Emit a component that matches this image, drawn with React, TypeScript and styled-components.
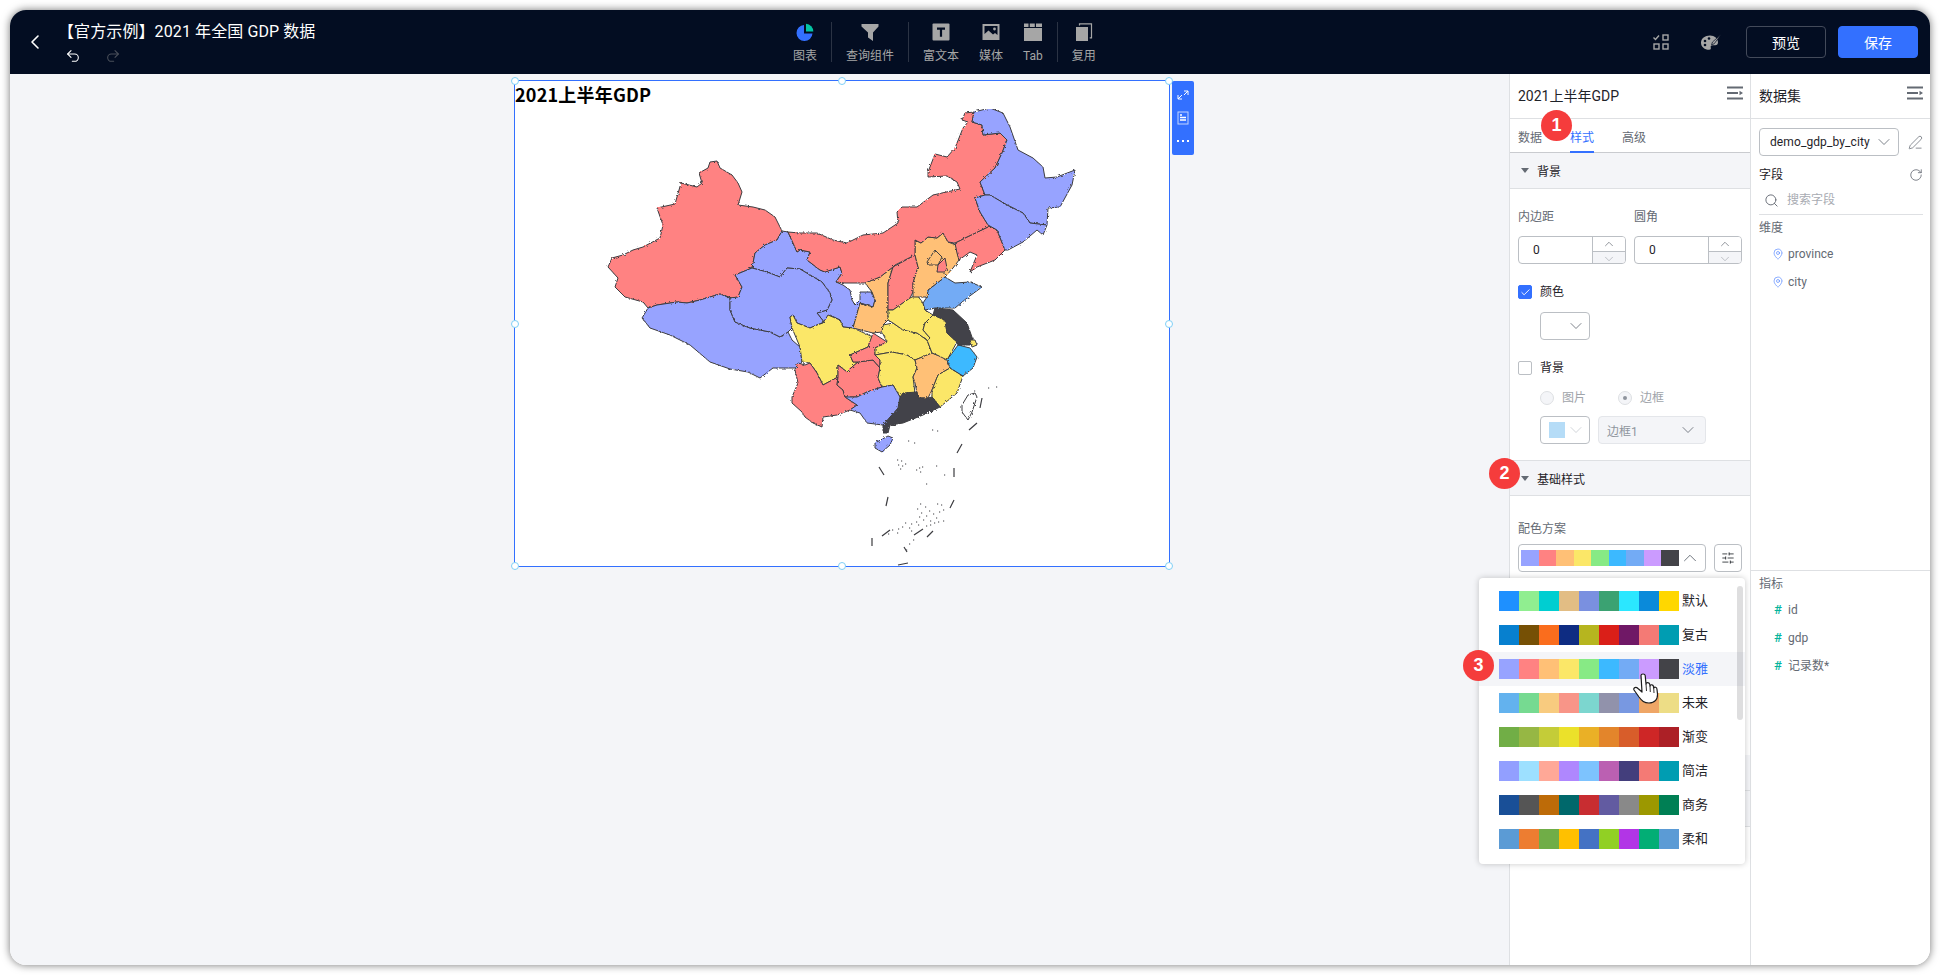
import React from 'react';
import styled, { createGlobalStyle } from 'styled-components';
import { Check, ChevronDown, ChevronLeft, ChevronUp, MapPin, PenLine, Redo2, RotateCw, Search, SlidersHorizontal, Undo2 } from 'lucide-react';

const SANS = 'Roboto, "Noto Sans CJK SC", sans-serif';

const palettes = [
  { name: '默认', colors: ['#1E90FF', '#90EE90', '#00CED1', '#E2BD84', '#7A90E0', '#3BA272', '#2BE7FF', '#0A8ADA', '#FFD700'] },
  { name: '复古', colors: ['#0780cf', '#765005', '#fa6d1d', '#0e2c82', '#b6b51f', '#da1f18', '#701866', '#f47a75', '#009db2'] },
  { name: '淡雅', colors: ['#97a3ff', '#ff8282', '#ffc076', '#fbe768', '#87ea85', '#3cb9ff', '#73abf5', '#cb9bff', '#434348'] },
  { name: '未来', colors: ['#63b2ee', '#76da91', '#f8cb7f', '#f89588', '#7cd6cf', '#9192ab', '#7898e1', '#efa666', '#eddd86'] },
  { name: '渐变', colors: ['#71ae46', '#96b744', '#c4cc38', '#ebe12a', '#eab026', '#e3852b', '#d85d2a', '#ce2626', '#ac2026'] },
  { name: '简洁', colors: ['#929fff', '#9de0ff', '#ffa897', '#af87fe', '#7dc3fe', '#bb60b2', '#433e7c', '#f47a75', '#009db2'] },
  { name: '商务', colors: ['#194f97', '#555555', '#bd6b08', '#00686b', '#c82d31', '#625ba1', '#898989', '#9c9800', '#007f54'] },
  { name: '柔和', colors: ['#5b9bd5', '#ed7d31', '#70ad47', '#ffc000', '#4472c4', '#91d024', '#b235e6', '#02ae75', '#5b9bd5'] },
];

const [P, R, O, Y, , C, B, , D] = palettes[2].colors;

const provinces: [string, string][] = [
  [R, '710,162 717,161 720,168 732,175 738,183 742,192 738,205 753,207 765,210 775,217 782,231 777,240 765,245 755,253 752,268 735,275 742,287 738,297 732,298 720,294 700,300 687,303 677,302 657,305 648,308 643,302 625,297 615,287 618,278 608,267 612,258 623,255 633,250 643,247 660,238 663,225 657,208 675,204 677,197 681,183 697,187 702,183 699,173 708,168'],
  [P, '648,308 657,305 677,302 687,303 700,300 720,294 730,298 730,310 735,322 750,328 760,330 770,332 780,337 788,332 792,340 800,347 802,362 797,368 787,368 773,368 760,378 748,372 730,369 710,362 690,345 670,335 650,328 642,318'],
  [P, '782,231 788,232 793,243 797,252 800,250 810,252 807,260 820,270 825,272 840,267 842,273 836,282 843,285 850,290 852,300 855,305 860,300 860,292 872,292 875,300 873,307 860,303 858,310 853,328 843,327 840,320 830,315 824,322 817,313 827,310 832,300 830,293 822,282 810,275 800,269 787,268 780,277 767,272 752,268 755,253 765,245 777,240'],
  [P, '735,275 752,268 767,272 780,277 787,268 800,269 810,275 822,282 830,293 832,300 827,310 817,313 824,322 817,325 810,328 797,323 793,315 790,317 792,328 788,332 780,337 770,332 760,330 750,328 735,322 730,310 730,298 738,297 742,287'],
  [Y, '790,317 793,315 797,323 810,328 817,325 823,323 828,315 840,320 843,327 853,328 873,337 868,347 850,355 853,362 858,362 852,367 847,372 838,365 838,377 823,385 817,373 810,363 802,362 800,347 792,328'],
  [R, '798,363 805,365 810,363 817,373 823,385 838,377 837,385 843,390 845,397 857,405 850,410 837,415 823,417 822,427 813,423 805,417 802,412 792,403 792,397 798,383 795,370'],
  [R, '838,377 838,365 847,372 852,367 858,362 873,360 880,368 878,378 882,387 867,392 857,397 845,397 843,390 837,385'],
  [R, '873,333 887,342 875,348 875,355 880,360 880,368 873,360 858,362 853,362 850,355 868,347'],
  [Y, '882,332 883,325 893,323 903,330 917,333 927,340 932,353 915,360 907,355 892,352 875,355 875,348 887,342'],
  [Y, '875,355 892,352 907,355 915,360 917,368 913,377 915,393 900,397 893,385 882,387 878,378 880,368 880,360'],
  [O, '915,360 932,353 937,355 948,358 950,368 938,375 932,390 928,398 918,398 915,383 913,377 917,368'],
  [Y, '950,368 963,376 957,393 940,407 932,397 932,390 938,375'],
  [C, '947,360 958,345 970,348 977,357 973,368 963,376 950,368'],
  [D, '900,397 903,393 917,392 918,398 928,398 932,397 940,407 923,415 903,423 890,425 888,433 883,433 883,425 898,408'],
  [P, '845,397 857,397 867,392 882,387 893,385 900,397 898,408 883,425 867,423 860,413 850,410 857,405'],
  [P, '875,443 888,436 893,438 890,445 882,452 875,448'],
  [O, '865,283 880,277 893,267 888,283 888,320 883,325 882,332 873,333 853,328 858,310 860,303 873,307 875,300 872,292'],
  [R, '893,267 915,255 918,267 913,283 913,292 910,298 893,310 888,310 888,283'],
  [Y, '888,310 893,310 910,298 917,295 923,303 925,310 933,315 925,323 923,330 930,338 927,340 917,333 903,330 893,323 888,320'],
  [Y, '925,323 933,315 945,320 947,333 957,342 947,360 937,355 932,353 927,340 930,338 923,330'],
  [D, '935,308 953,310 967,323 973,340 970,345 958,345 957,342 947,333 945,320 933,315'],
  [Y, '970,340 975,340 977,345 972,347'],
  [B, '923,303 927,297 928,290 945,277 955,283 970,282 982,287 967,298 955,308 935,308 925,310'],
  [O, '915,240 921,243 928,237 937,238 943,233 948,242 956,245 959,260 953,268 945,277 928,290 927,297 913,297 913,283 918,267 915,255'],
  [O, '927,262 935,250 942,257 938,265 928,265'],
  [R, '938,265 945,258 947,268 945,272 937,272'],
  [R, '955,243 967,237 990,226 997,230 1005,250 995,260 977,267 970,272 977,255 970,252 959,260 957,253'],
  [R, '788,232 800,233 817,233 833,240 847,243 863,235 883,233 898,223 897,212 902,207 917,207 933,195 960,189 957,182 947,176 928,177 928,172 935,154 947,157 955,148 963,128 968,122 962,120 965,113 974,112 972,122 982,125 983,135 1000,133 1007,140 1002,153 995,168 980,182 985,195 975,198 980,212 988,225 990,226 967,237 955,243 948,242 943,233 937,238 928,237 921,243 915,240 915,255 895,265 893,267 880,277 865,283 845,283 836,282 842,273 840,267 825,272 820,270 807,260 810,252 800,250 797,252 793,243'],
  [P, '974,112 990,108 1003,113 1010,127 1018,150 1033,158 1043,167 1045,178 1057,177 1075,170 1072,185 1060,207 1048,208 1047,225 1030,223 1023,213 1007,205 990,195 985,195 980,182 995,168 1002,153 1007,140 1000,133 983,135 982,125 972,122'],
  [P, '975,198 985,195 990,195 1007,205 1023,213 1030,223 1047,225 1043,235 1037,230 1023,242 1008,250 1005,250 997,230 988,225 980,212'],
  ['#ffffff', '968,395 975,393 977,397 972,412 968,420 962,412 962,405'],
];

const seaDashes = [
  'M969 430L977 423', 'M980 408L982 398', 'M957 453L962 444', 'M879 467L884 475', 'M954 468V477', 'M886 506L888 497',
  'M950 508L954 500', 'M872 546L872 538', 'M927 537L933 531', 'M914 535L923 529', 'M882 536L890 530', 'M898 565L908 563', 'M904 547L907 552',
];

const seaDots = [
  [897, 460], [901, 461], [898, 465], [902, 466], [905, 464], [900, 469], [916, 470], [919, 468], [922, 467], [920, 472], [936, 466], [944, 475], [926, 484], [920, 504], [917, 509],
  [921, 513], [925, 507], [919, 517], [926, 516], [929, 511], [933, 514], [936, 518], [939, 512], [943, 510], [941, 505], [937, 504], [930, 521], [934, 523], [923, 520], [916, 522],
  [911, 524], [905, 523], [902, 527], [898, 529], [897, 533], [909, 528], [911, 531], [918, 525], [926, 526], [930, 525], [913, 540], [909, 544], [906, 550], [943, 521], [938, 522],
  [892, 530], [888, 534], [933, 388], [974, 391], [988, 388], [996, 387], [932, 430], [937, 431], [908, 441], [914, 443],
];

const GlobalStyle = createGlobalStyle`
  html, body {
    margin: 0;
    background: #fff;
    overflow: hidden;
  }
  * {
    box-sizing: border-box;
  }
`;

const Frame = styled.div`
  margin: 10px;
  width: 1920px;
  height: 955px;
  border-radius: 16px;
  box-shadow: 0 0 9px rgba(0, 0, 0, 0.55);
  font-family: ${SANS};
  font-size: 12px;
  color: #1f2329;
  display: flex;
  flex-direction: column;
  overflow: hidden;
  background: #fff;
`;

const TopBar = styled.header`
  height: 64px;
  flex: none;
  background: #030d22;
  display: flex;
  align-items: center;
  padding-right: 12px;
`;

const BackButton = styled.div`
  width: 48px;
  padding-left: 13px;
  display: flex;
  color: #fff;
`;

const TitleBlock = styled.div`
  width: 735px;
`;

const DocTitle = styled.div`
  font-size: 16px;
  line-height: 22px;
  letter-spacing: 0.1px;
  color: #fff;
`;

const History = styled.div`
  display: flex;
  gap: 24px;
  margin: 5px 0 0 7px;
  height: 16px;
`;

const Tools = styled.nav`
  display: flex;
  align-items: center;
  flex: 1;
  padding-top: 3px;
`;

const ToolDivider = styled.span`
  width: 1px;
  height: 40px;
  margin: -3px 14px 0 14px;
  background: #2b3344;
`;

const ToolItem = styled.div<{ $gap?: number }>`
  display: flex;
  flex-direction: column;
  align-items: center;
  gap: 7px;
  margin-right: ${(p) => p.$gap ?? 0}px;
  color: #a6a6a6;
  line-height: 16px;
`;

const ToolIcon = styled.svg`
  width: 18px;
  height: 18px;
  display: block;
`;

const BarIcon = styled.span<{ $gap: number }>`
  display: flex;
  margin-right: ${(p) => p.$gap}px;
`;

const PlainButton = styled.button`
  width: 80px;
  height: 32px;
  border: 1px solid #434a5a;
  border-radius: 4px;
  background: transparent;
  color: #fff;
  font: 14px ${SANS};
`;

const SaveButton = styled(PlainButton)`
  margin-left: 12px;
  background: #3370ff;
  border-color: #3370ff;
`;

const Body = styled.main`
  flex: 1;
  display: flex;
  min-height: 0;
`;

const Canvas = styled.section`
  flex: 1;
  background: #f4f5f8;
  padding: 6px 0 0 504px;
`;

const Widget = styled.div`
  position: relative;
  width: 656px;
  height: 487px;
  background: #fff;
  border: 1px solid #3370ff;
`;

const WidgetTitle = styled.div`
  height: 28px;
  font-size: 18px;
  font-weight: 700;
  line-height: 26px;
  letter-spacing: 0.2px;
  color: #000;
  font-family: "Noto Sans CJK SC", sans-serif;
`;

const MapSvg = styled.svg`
  display: block;
  width: 654px;
  height: 457px;
`;

const Handle = styled.span<{ $x: number; $y: number }>`
  position: absolute;
  left: ${(p) => p.$x}%;
  top: ${(p) => p.$y}%;
  width: 8px;
  height: 8px;
  transform: translate(-50%, -50%);
  border-radius: 50%;
  background: #fff;
  border: 1px solid #7fd0f7;
`;

const WidgetBar = styled.div`
  position: absolute;
  left: 657px;
  top: 0;
  width: 22px;
  height: 74px;
  background: #3370ff;
  border-radius: 2px;
  display: flex;
  flex-direction: column;
  align-items: center;
  justify-content: space-around;
  padding: 3px 0;
`;

const BarGlyph = styled.svg`
  width: 12px;
  height: 14px;
  display: block;
`;

const PanelA = styled.aside`
  position: relative;
  width: 241px;
  flex: none;
  background: #fff;
  border-left: 1px solid #dee0e3;
`;

const PanelB = styled.aside`
  width: 180px;
  flex: none;
  background: #fff;
  border-left: 1px solid #dee0e3;
  display: flex;
  flex-direction: column;
`;

const PanelHead = styled.div`
  height: 45px;
  flex: none;
  display: flex;
  align-items: center;
  justify-content: space-between;
  padding: 0 7px 0 8px;
  border-bottom: 1px solid #dee0e3;
  font-size: 14px;
  line-height: 20px;
  svg {
    margin-top: -6px;
  }
`;

const Tabs = styled.div`
  height: 34px;
  display: flex;
  gap: 28px;
  padding-left: 8px;
  border-bottom: 1px solid #c9cbcf;
`;

const Tab = styled.div<{ $active?: boolean }>`
  line-height: 38px;
  height: 34px;
  color: ${(p) => (p.$active ? '#3370ff' : '#646a73')};
  border-bottom: ${(p) => (p.$active ? '2px solid #3370ff' : 'none')};
`;

const SectionBar = styled.div<{ $top?: boolean }>`
  height: 36px;
  display: flex;
  align-items: center;
  gap: 8px;
  padding-left: 11px;
  background: #f4f5f8;
  border-bottom: 1px solid #dee0e3;
  border-top: ${(p) => (p.$top ? '1px solid #dee0e3' : 'none')};
  &::before {
    content: '';
    border-left: 4px solid transparent;
    border-right: 4px solid transparent;
    border-top: 5px solid #646a73;
  }
`;

const SectionBody = styled.div`
  padding: 18px 8px 16px;
`;

const Columns = styled.div`
  display: flex;
  gap: 8px;
`;

const Field = styled.div`
  width: 108px;
`;

const FieldLabel = styled.div`
  line-height: 20px;
  color: #646a73;
  margin-bottom: 9px;
`;

const NumberBox = styled.div`
  height: 28px;
  display: flex;
  border: 1px solid #bbbfc4;
  border-radius: 4px;
  overflow: hidden;
`;

const NumberValue = styled.div`
  flex: 1;
  padding-left: 14px;
  line-height: 26px;
`;

const Stepper = styled.div`
  width: 33px;
  display: flex;
  flex-direction: column;
  border-left: 1px solid #bbbfc4;
`;

const StepCell = styled.div<{ $muted?: boolean }>`
  flex: 1;
  display: flex;
  align-items: center;
  justify-content: center;
  background: ${(p) => (p.$muted ? '#f4f5f8' : '#fff')};
  border-top: ${(p) => (p.$muted ? '1px solid #bbbfc4' : 'none')};
  color: ${(p) => (p.$muted ? '#a8abb2' : '#646a73')};
`;

const CheckRow = styled.div`
  display: flex;
  align-items: center;
  gap: 8px;
  line-height: 20px;
  margin-top: 18px;
`;

const CheckBox = styled.span<{ $on?: boolean }>`
  width: 14px;
  height: 14px;
  border-radius: 2px;
  display: flex;
  align-items: center;
  justify-content: center;
  background: ${(p) => (p.$on ? '#3370ff' : '#fff')};
  border: 1px solid ${(p) => (p.$on ? '#3370ff' : '#bbbfc4')};
  color: #fff;
`;

const Indented = styled.div<{ $top: number }>`
  margin: ${(p) => p.$top}px 0 0 22px;
  display: flex;
  align-items: center;
  gap: 8px;
`;

const SelectBox = styled.div<{ $w: number; $disabled?: boolean }>`
  width: ${(p) => p.$w}px;
  height: 28px;
  display: flex;
  align-items: center;
  justify-content: space-between;
  padding: 0 ${(p) => (p.$disabled ? 7 : 3)}px 0 8px;
  border-radius: 4px;
  border: 1px solid ${(p) => (p.$disabled ? '#e4e6ea' : '#bbbfc4')};
  background: ${(p) => (p.$disabled ? '#f4f5f8' : '#fff')};
  color: ${(p) => (p.$disabled ? '#8f959e' : '#1f2329')};
`;

const ColorChip = styled.span`
  width: 16px;
  height: 16px;
  background: #b5dcf7;
`;

const RadioRow = styled.div`
  display: flex;
  align-items: center;
  line-height: 20px;
  color: #a0a4aa;
`;

const Radio = styled.span<{ $on?: boolean }>`
  width: 14px;
  height: 14px;
  border-radius: 50%;
  border: 1px solid #dee0e3;
  background: #f4f5f8;
  margin-right: 8px;
  display: flex;
  align-items: center;
  justify-content: center;
  &::after {
    content: '';
    width: 4px;
    height: 4px;
    border-radius: 50%;
    background: ${(p) => (p.$on ? '#8f959e' : 'transparent')};
  }
`;

const RadioText = styled.span`
  width: 56px;
`;

const PaletteBody = styled.div`
  padding: 23px 8px 0;
  height: 259px;
`;

const PaletteLabel = styled.div`
  line-height: 20px;
  color: #646a73;
  margin-bottom: 5px;
`;

const PaletteRow = styled.div`
  display: flex;
  gap: 8px;
`;

const PaletteSelect = styled.div`
  width: 188px;
  height: 28px;
  display: flex;
  align-items: center;
  padding: 0 4px 0 2px;
  justify-content: space-between;
  border: 1px solid #bbbfc4;
  border-radius: 4px;
`;

const MiniStrip = styled.div`
  display: flex;
`;

const MiniSwatch = styled.span`
  width: 17.55px;
  height: 16px;
`;

const SquareButton = styled.div`
  width: 28px;
  height: 28px;
  border: 1px solid #bbbfc4;
  border-radius: 4px;
  display: flex;
  align-items: center;
  justify-content: center;
  color: #1f2329;
`;

const PaletteMenu = styled.div`
  position: absolute;
  left: -31px;
  top: 504px;
  width: 266px;
  height: 286px;
  padding-top: 6px;
  background: #fff;
  border-radius: 4px;
  box-shadow: 0 0 6px rgba(0, 0, 0, 0.22);
  z-index: 2;
`;

const MenuRow = styled.div<{ $active?: boolean }>`
  height: 34px;
  display: flex;
  align-items: center;
  padding-left: 20px;
  gap: 3px;
  font-size: 13px;
  line-height: 18px;
  background: ${(p) => (p.$active ? '#f4f5f8' : 'transparent')};
  color: ${(p) => (p.$active ? '#3370ff' : '#1f2329')};
`;

const Swatch = styled.span`
  width: 20px;
  height: 20px;
`;

const ScrollThumb = styled.span`
  position: absolute;
  left: 258px;
  top: 8px;
  width: 6px;
  height: 134px;
  border-radius: 3px;
  background: rgba(31, 35, 41, 0.15);
`;

const Hand = styled.svg`
  position: absolute;
  left: 154px;
  top: 94px;
  width: 25px;
  height: 32px;
`;

const StepBadge = styled.span<{ $x: number; $y: number }>`
  position: absolute;
  left: ${(p) => p.$x}px;
  top: ${(p) => p.$y}px;
  width: 31px;
  height: 31px;
  border-radius: 50%;
  background: #f53c3c;
  color: #fff;
  font-size: 18px;
  font-weight: 700;
  font-family: "Liberation Sans", sans-serif;
  display: flex;
  align-items: center;
  justify-content: center;
  z-index: 3;
`;

const DatasetArea = styled.div`
  height: 452px;
  flex: none;
  padding: 9px 7px 0 8px;
  border-bottom: 1px solid #dee0e3;
`;

const DatasetRow = styled.div`
  display: flex;
  align-items: center;
  justify-content: space-between;
`;

const DatasetSelect = styled.div`
  width: 140px;
  height: 28px;
  display: flex;
  align-items: center;
  justify-content: space-between;
  padding: 0 4px 0 10px;
  border: 1px solid #bbbfc4;
  border-radius: 4px;
  letter-spacing: 0.1px;
`;

const FieldsHead = styled.div`
  display: flex;
  align-items: center;
  justify-content: space-between;
  line-height: 20px;
  margin-top: 9px;
`;

const SearchRow = styled.div`
  display: flex;
  align-items: center;
  gap: 8px;
  margin-top: 5px;
  padding: 0 0 4px 5px;
  line-height: 20px;
  color: #a8abb2;
  border-bottom: 1px solid #dee0e3;
  svg {
    color: #646a73;
  }
`;

const GroupLabel = styled.div<{ $top: number }>`
  margin-top: ${(p) => p.$top}px;
  line-height: 20px;
  color: #646a73;
  margin-bottom: 2px;
`;

const FieldRow = styled.div`
  height: 28px;
  display: flex;
  align-items: center;
  gap: 5px;
  padding-left: 14px;
  color: #646a73;
  line-height: 16px;
`;

const FieldMark = styled.span`
  width: 10px;
  display: flex;
  justify-content: center;
  color: #04b49c;
  font-size: 13px;
  font-weight: 500;
`;

const MetricsArea = styled.div`
  flex: 1;
  padding: 3px 8px 0;
`;

const handles = [
  [0, 0], [50, 0], [100, 0], [0, 50], [100, 50], [0, 100], [50, 100], [100, 100],
];

const CollapseIcon = () => (
  <svg width="16" height="14" viewBox="0 0 16 14">
    <path d="M0 0.5h16v2H0zM0 6h11v2H0zM0 11.5h16v2H0z" fill="#646a73" />
    <path d="M12.5 4.8L16 7l-3.5 2.2z" fill="#646a73" />
  </svg>
);

const Chevron = ({ light }: { light?: boolean }) => (
  <ChevronDown size={20} strokeWidth={1} color={light ? '#c8ccd2' : '#646a73'} />
);

const StepUp = () => <ChevronUp size={14} strokeWidth={1.2} />;
const StepDown = () => <ChevronDown size={14} strokeWidth={1.2} />;

const Pin = () => (
  <FieldMark>
    <MapPin size={12} strokeWidth={1.4} color="#5d8cff" style={{ flex: 'none' }} />
  </FieldMark>
);

const PieTool = () => (
  <ToolIcon viewBox="0 0 18 18">
    <path d="M8 2a8 8 0 1 0 8.500 8.500H8z" fill="#3370ff" />
    <path d="M10 0.800a7.500 7.500 0 0 1 7.300 7.700H10z" fill="#04c4a4" />
  </ToolIcon>
);

const FunnelTool = () => (
  <ToolIcon viewBox="0 0 18 18">
    <path d="M0.500 1h17v2.500l-5.500 6v8.500l-5-3.500v-5l-6.500-6z" fill="#a6a6a6" />
  </ToolIcon>
);

const TextTool = () => (
  <ToolIcon viewBox="0 0 18 18">
    <rect x="0.500" y="0.500" width="17" height="17" rx="1" fill="#a6a6a6" />
    <path d="M5 4.500h8v2.200h-2.900v7H7.900v-7H5z" fill="#030d22" />
  </ToolIcon>
);

const MediaTool = () => (
  <ToolIcon viewBox="0 0 18 18">
    <path d="M0.500 1h17v16H0.500zM2.500 3v8l4-3.500 4.500 4 2-1.500 2.500 2V3z" fill="#a6a6a6" fillRule="evenodd" />
    <circle cx="12.500" cy="6" r="1.400" fill="#a6a6a6" />
  </ToolIcon>
);

const TabTool = () => (
  <ToolIcon viewBox="0 0 18 18">
    <path d="M0 0.500h4.500v3.500H0zM5.800 0.500h5v3.500h-5zM12 0.500h6v3.500h-6zM0 5h18v13H0z" fill="#a6a6a6" />
  </ToolIcon>
);

const CopyTool = () => (
  <ToolIcon viewBox="0 0 18 18">
    <path d="M1 4h12v14H1z" fill="#a6a6a6" />
    <path d="M4.500 2.500V0.800h12v14h-1.800" fill="none" stroke="#a6a6a6" strokeWidth="1.200" />
  </ToolIcon>
);

const App: React.FC = () => {
  return (
    <Frame>
      <GlobalStyle />
      <TopBar>
        <BackButton>
          <ChevronLeft size={24} strokeWidth={1.6} />
        </BackButton>
        <TitleBlock>
          <DocTitle>【官方示例】2021 年全国 GDP 数据</DocTitle>
          <History>
            <Undo2 size={16} color="#fff" strokeWidth={1.6} />
            <Redo2 size={16} color="#4a4f5a" strokeWidth={1.6} />
          </History>
        </TitleBlock>
        <Tools>
          <ToolItem>
            <PieTool />
            图表
          </ToolItem>
          <ToolDivider />
          <ToolItem>
            <FunnelTool />
            查询组件
          </ToolItem>
          <ToolDivider />
          <ToolItem $gap={20}>
            <TextTool />
            富文本
          </ToolItem>
          <ToolItem $gap={20}>
            <MediaTool />
            媒体
          </ToolItem>
          <ToolItem>
            <TabTool />
            Tab
          </ToolItem>
          <ToolDivider />
          <ToolItem>
            <CopyTool />
            复用
          </ToolItem>
        </Tools>
        <BarIcon $gap={32}>
          <svg width="16" height="16" viewBox="0 0 16 16" fill="none" stroke="#a6a6a6" strokeWidth="1.400">
            <path d="M0.500 3.500L2.500 5.500L6 1.500" />
            <rect x="10" y="1" width="5" height="5" />
            <rect x="1" y="10" width="5" height="5" />
            <rect x="10" y="10" width="5" height="5" />
          </svg>
        </BarIcon>
        <BarIcon $gap={25}>
          <svg width="20" height="16" viewBox="0 0 20 16">
            <path d="M9 1.500C4 1.500 0 4.500 0 8.800S3.800 15.800 8 15.800c2.200 0 2-1.500 1.700-2.500-.3-1.200.6-2 2.100-2h2.400c1.800 0 2.800-1 2.800-3 0-3.600-3.400-6.800-8-6.800z" fill="#a6a6a6" />
            <circle cx="4" cy="7" r="1.300" fill="#030d22" />
            <circle cx="8" cy="4.500" r="1.300" fill="#030d22" />
            <circle cx="4" cy="11" r="1.300" fill="#030d22" />
            <path d="M20 0.500L11.500 8 10.500 10.800 13.200 9.800z" fill="#a6a6a6" stroke="#030d22" strokeWidth="0.700" />
          </svg>
        </BarIcon>
        <PlainButton>预览</PlainButton>
        <SaveButton>保存</SaveButton>
      </TopBar>
      <Body>
        <Canvas>
          <Widget>
            <WidgetTitle>2021上半年GDP</WidgetTitle>
            <MapSvg viewBox="515 109 654 457">
              <defs>
                <filter id="rough" x="-2%" y="-2%" width="104%" height="104%">
                  <feTurbulence type="fractalNoise" baseFrequency="0.45" numOctaves="2" seed="4" result="noise" />
                  <feDisplacementMap in="SourceGraphic" in2="noise" scale="3" />
                </filter>
              </defs>
              <g filter="url(#rough)" stroke="#3c3c40" strokeWidth="1" strokeLinejoin="round">
                {provinces.map(([fill, points], i) => (
                  <polygon key={i} points={points} fill={fill} />
                ))}
              </g>
              <path d={seaDashes.join('')} stroke="#3c3c40" strokeWidth="1.200" fill="none" />
              <path d={seaDots.map(([x, y]) => `M${x} ${y}h1.200`).join('')} stroke="#3c3c40" strokeWidth="1" fill="none" />
            </MapSvg>
            {handles.map(([x, y]) => (
              <Handle key={`${x}-${y}`} $x={x} $y={y} />
            ))}
            <WidgetBar>
              <BarGlyph viewBox="0 0 12 14" fill="none" stroke="#fff" strokeWidth="1">
                <path d="M7 3h4v4M11 3L7 7M1 11V7M1 11h4M1 11l4-4" />
              </BarGlyph>
              <BarGlyph viewBox="0 0 12 14" fill="none" stroke="#fff" strokeWidth="1">
                <rect x="1" y="1" width="10" height="12" opacity="0.7" />
                <path d="M3 4h2M3 6.500h6M3 9h6" strokeWidth="1.300" />
              </BarGlyph>
              <BarGlyph viewBox="0 0 12 14">
                <path d="M0 6h2v2H0zM5 6h2v2H5zM10 6h2v2h-2z" fill="#fff" />
              </BarGlyph>
            </WidgetBar>
          </Widget>
        </Canvas>
        <PanelA>
          <PanelHead>
            2021上半年GDP
            <CollapseIcon />
          </PanelHead>
          <Tabs>
            <Tab>数据</Tab>
            <Tab $active>样式</Tab>
            <Tab>高级</Tab>
          </Tabs>
          <SectionBar>背景</SectionBar>
          <SectionBody>
            <Columns>
              <Field>
                <FieldLabel>内边距</FieldLabel>
                <NumberBox>
                  <NumberValue>0</NumberValue>
                  <Stepper>
                    <StepCell>
                      <StepUp />
                    </StepCell>
                    <StepCell $muted>
                      <StepDown />
                    </StepCell>
                  </Stepper>
                </NumberBox>
              </Field>
              <Field>
                <FieldLabel>圆角</FieldLabel>
                <NumberBox>
                  <NumberValue>0</NumberValue>
                  <Stepper>
                    <StepCell>
                      <StepUp />
                    </StepCell>
                    <StepCell $muted>
                      <StepDown />
                    </StepCell>
                  </Stepper>
                </NumberBox>
              </Field>
            </Columns>
            <CheckRow>
              <CheckBox $on>
                <Check size={11} strokeWidth={2} />
              </CheckBox>
              颜色
            </CheckRow>
            <Indented $top={10}>
              <SelectBox $w={50}>
                <span />
                <Chevron />
              </SelectBox>
            </Indented>
            <CheckRow>
              <CheckBox />
              背景
            </CheckRow>
            <Indented $top={10}>
              <RadioRow>
                <Radio />
                <RadioText>图片</RadioText>
                <Radio $on />
                边框
              </RadioRow>
            </Indented>
            <Indented $top={8}>
              <SelectBox $w={50}>
                <ColorChip />
                <Chevron light />
              </SelectBox>
              <SelectBox $w={108} $disabled>
                边框1
                <Chevron />
              </SelectBox>
            </Indented>
          </SectionBody>
          <SectionBar $top>基础样式</SectionBar>
          <PaletteBody>
            <PaletteLabel>配色方案</PaletteLabel>
            <PaletteRow>
              <PaletteSelect>
                <MiniStrip>
                  {palettes[2].colors.map((c, i) => (
                    <MiniSwatch key={i} style={{ background: c }} />
                  ))}
                </MiniStrip>
                <ChevronUp size={22} strokeWidth={1} color="#646a73" />
              </PaletteSelect>
              <SquareButton>
                <SlidersHorizontal size={14} strokeWidth={1.4} />
              </SquareButton>
            </PaletteRow>
          </PaletteBody>
          <SectionBar />
          <SectionBar />
          <PaletteMenu>
            {palettes.map((p) => (
              <MenuRow key={p.name} $active={p.name === '淡雅'}>
                <MiniStrip>
                  {p.colors.map((c, i) => (
                    <Swatch key={i} style={{ background: c }} />
                  ))}
                </MiniStrip>
                {p.name}
              </MenuRow>
            ))}
            <ScrollThumb />
            <Hand viewBox="0 0 25 32">
              <path
                d="M8 3.500C8 1.500 12 1.500 12.200 3.500L13 12C13.200 10 16.500 10 16.800 12.500L17 14C17.500 12 20.500 12.500 20.500 14.800L20.700 16C21.500 14.500 24 15 24 17.500L24.500 22C24.800 27 22 31 16 31C11 31 9 29 6 25L1 18C0 15.500 3 14.500 5 16.500L9 20Z"
                fill="#fff"
                stroke="#1a1a1a"
                strokeWidth="1.200"
                strokeLinejoin="round"
              />
              <path d="M13 12L13.500 19M17 14L17.300 20M20.700 16L21 21" stroke="#1a1a1a" strokeWidth="0.900" fill="none" />
            </Hand>
          </PaletteMenu>
          <StepBadge $x={31} $y={36}>1</StepBadge>
          <StepBadge $x={-21} $y={384}>2</StepBadge>
          <StepBadge $x={-47} $y={576}>3</StepBadge>
        </PanelA>
        <PanelB>
          <PanelHead>
            数据集
            <CollapseIcon />
          </PanelHead>
          <DatasetArea>
            <DatasetRow>
              <DatasetSelect>
                demo_gdp_by_city
                <ChevronDown size={20} strokeWidth={1} color="#646a73" />
              </DatasetSelect>
              <PenLine size={15} strokeWidth={1.2} color="#646a73" />
            </DatasetRow>
            <FieldsHead>
              字段
              <RotateCw size={14} strokeWidth={1.4} color="#646a73" />
            </FieldsHead>
            <SearchRow>
              <Search size={15} strokeWidth={1.5} />
              搜索字段
            </SearchRow>
            <GroupLabel $top={3}>维度</GroupLabel>
            <FieldRow>
              <Pin />
              province
            </FieldRow>
            <FieldRow>
              <Pin />
              city
            </FieldRow>
          </DatasetArea>
          <MetricsArea>
            <GroupLabel $top={0}>指标</GroupLabel>
            <FieldRow>
              <FieldMark>#</FieldMark>
              id
            </FieldRow>
            <FieldRow>
              <FieldMark>#</FieldMark>
              gdp
            </FieldRow>
            <FieldRow>
              <FieldMark>#</FieldMark>
              记录数*
            </FieldRow>
          </MetricsArea>
        </PanelB>
      </Body>
    </Frame>
  );
};

export default App;
